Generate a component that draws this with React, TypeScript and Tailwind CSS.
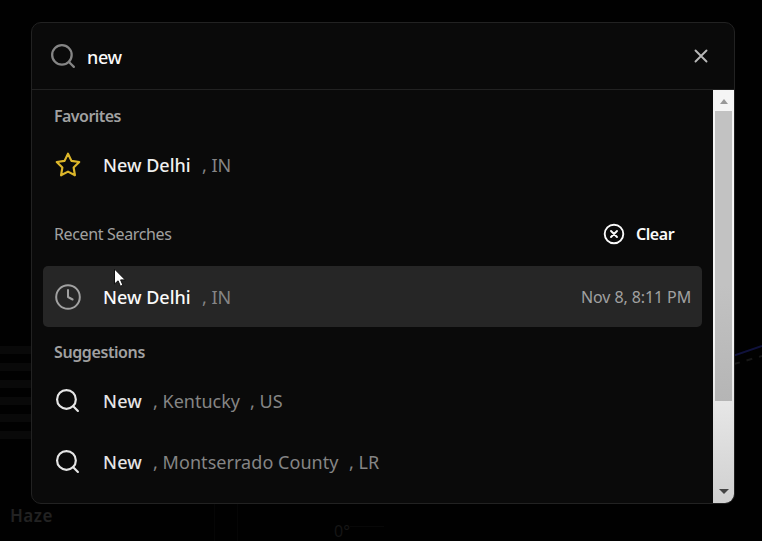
import React from "react";

function SearchIcon({ className }: { className: string }) {
  return (
    <svg className={className} viewBox="0 0 24 24" fill="none" stroke="currentColor" strokeWidth="2.1" strokeLinecap="round" strokeLinejoin="round">
      <circle cx="11" cy="11" r="9" />
      <path d="m22 22-4.5-4.5" />
    </svg>
  );
}

function Row({ icon, active, time, children }: { icon: React.ReactNode; active?: boolean; time?: string; children: React.ReactNode }) {
  return (
    <div className={`flex h-[61px] shrink-0 items-center rounded-[5px] pr-[10px] pl-[12px] text-[18px] leading-[24px] ${active ? "bg-[#262626]" : "pb-[2px]"}`}>
      <div className="flex w-[48px] shrink-0 items-center">{icon}</div>
      <div className="flex flex-1 items-center whitespace-pre">{children}</div>
      {time && <span className="w-[111px] text-[16px] tracking-[-0.1px] whitespace-nowrap text-[#a1a1a1]">{time}</span>}
    </div>
  );
}

function Backdrop() {
  return (
    <div className="flex h-full flex-col">
      <div className="h-[216px]" />
      <div className="flex h-[288px] justify-between">
        <div className="flex flex-col gap-[9px] pt-[130px]">
          <div className="h-2 w-8 bg-[#090909]" />
          <div className="h-2 w-8 bg-[#090909]" />
          <div className="h-2 w-8 bg-[#090909]" />
          <div className="h-2 w-8 bg-[#090909]" />
          <div className="h-2 w-8 bg-[#090909]" />
          <div className="h-2 w-8 bg-[#090909]" />
        </div>
        <svg className="mt-[124px] h-[30px] w-[28px]" viewBox="0 0 28 30" fill="none">
          <path d="M0 15.5 28 6" stroke="#10123c" strokeWidth="2" />
          <path d="M0 24 28 16" stroke="#171717" strokeWidth="2" strokeDasharray="6 7" />
        </svg>
      </div>
      <div className="flex h-[37px]">
        <div className="w-[214px] pl-[10px] text-[17px] leading-[24px] font-semibold tracking-[0.5px] text-[#222222]">Haze</div>
        <div className="w-[24px] border-x border-[#060606]" />
        <div className="pt-[16px] pl-[96px] text-[16px] leading-[22px] text-[#161616]">0°</div>
        <div className="mt-[22px] h-px w-[34px] bg-[#080808]" />
      </div>
    </div>
  );
}

export default function App() {
  return (
    <div className="relative h-[541px] w-[762px] overflow-hidden bg-[#010101] font-['Noto_Sans','Open_Sans',sans-serif]">
      <Backdrop />
      <div className="absolute top-[22px] left-[31px] flex h-[482px] w-[704px] flex-col overflow-hidden rounded-[10px] border border-[#222222] bg-[#0a0a0a]">
        <div className="flex h-[67px] shrink-0 items-center border-b border-[#222222] pr-[24px] pl-[18px]">
          <SearchIcon className="mr-[11px] size-[26px] text-[#858585]" />
          <span className="flex-1 pt-[2px] text-[18px] leading-[24px] font-medium tracking-[-0.4px] text-[#fafafa]">new</span>
          <svg className="size-[18px] text-[#b8b8b8]" viewBox="0 0 18 18" fill="none" stroke="currentColor" strokeWidth="1.9" strokeLinecap="round">
            <path d="m3.5 3.5 11 11M14.5 3.5l-11 11" />
          </svg>
        </div>
        <div className="flex min-h-0 flex-1">
          <div className="flex flex-1 flex-col px-[11px]">
            <div className="h-[45px] shrink-0 pt-[14px] pl-[11px] text-[16px] leading-[24px] font-semibold tracking-[-0.55px] text-[#a1a1a1]">Favorites</div>
            <Row
              icon={
                <svg className="size-[26px] text-[#dcb62a]" viewBox="0 0 24 24" fill="none" stroke="currentColor" strokeWidth="2" strokeLinejoin="round">
                  <path d="m12 1.6 3.2 6.6 7.2 1-5.2 5.1 1.2 7.2-6.4-3.4-6.4 3.4 1.2-7.2-5.2-5.1 7.2-1z" />
                </svg>
              }
            >
              <span className="w-[99px] font-medium tracking-[0px] text-[#f0f0f0]">New Delhi</span>
              <span className="text-[#858585]">, IN</span>
            </Row>
            <div className="flex h-[70px] shrink-0 items-center justify-between pt-[5px] pr-[27px] pl-[11px] text-[16px] leading-[24px]">
              <span className="tracking-[-0.35px] text-[#a1a1a1]">Recent Searches</span>
              <span className="flex items-center text-[#fafafa]">
                <svg className="mr-[11px] size-[22px]" viewBox="0 0 22 22" fill="none" stroke="currentColor" strokeWidth="1.9" strokeLinecap="round">
                  <circle cx="11" cy="11" r="9.3" />
                  <path d="m8 8 6 6M14 8l-6 6" />
                </svg>
                <span className="w-[39px] font-semibold tracking-[-0.45px]">Clear</span>
              </span>
            </div>
            <Row
              active
              time="Nov 8, 8:11 PM"
              icon={
                <svg className="size-[26px] text-[#a1a1a1]" viewBox="0 0 26 26" fill="none" stroke="currentColor" strokeWidth="2" strokeLinecap="round" strokeLinejoin="round">
                  <circle cx="13" cy="13" r="11.8" />
                  <path d="M13 6v7l4.6 2.5" />
                </svg>
              }
            >
              <span className="w-[99px] font-medium tracking-[0px] text-[#fafafa]">New Delhi</span>
              <span className="text-[#858585]">, IN</span>
            </Row>
            <div className="h-[44px] shrink-0 pt-[13px] pl-[11px] text-[16px] leading-[24px] font-semibold tracking-[-0.4px] text-[#a1a1a1]">Suggestions</div>
            <Row icon={<SearchIcon className="size-[25px] text-[#e5e5e5]" />}>
              <span className="w-[50px] font-medium tracking-[0.2px] text-[#e5e5e5]">New</span>
              <span className="w-[97px] text-[#858585]">, Kentucky</span>
              <span className="text-[#858585]">, US</span>
            </Row>
            <Row icon={<SearchIcon className="size-[25px] text-[#e5e5e5]" />}>
              <span className="w-[50px] font-medium tracking-[0.2px] text-[#e5e5e5]">New</span>
              <span className="w-[196px] tracking-[0.05px] text-[#858585]">, Montserrado County</span>
              <span className="text-[#858585]">, LR</span>
            </Row>
          </div>
          <div className="flex w-[21px] flex-col items-center bg-linear-to-b from-[#f5f5f5] from-60% to-[#d0d0d0]">
            <div className="flex h-[21px] items-center justify-center">
              <svg className="size-[8px]" viewBox="0 0 8 8"><path d="M4 2 8 7H0z" fill="#999" /></svg>
            </div>
            <div className="h-[290px] w-[17px] bg-linear-to-b from-[#c2c2c2] from-60% to-[#b5b5b5]" />
            <div className="flex-1" />
            <svg className="mb-[8px] h-[6px] w-[10px]" viewBox="0 0 10 6"><path d="M0 0h10L5 5z" fill="#444" /></svg>
          </div>
        </div>
      </div>
      <svg className="absolute top-[268px] left-[113px] h-[21px] w-[14px]" viewBox="0 0 14 21">
        <path d="M1.5 1v15l3.6-3.2 2.3 5.4 2.5-1-2.3-5.3h4.7z" fill="#fff" stroke="#111" strokeWidth="1" />
      </svg>
    </div>
  );
}
